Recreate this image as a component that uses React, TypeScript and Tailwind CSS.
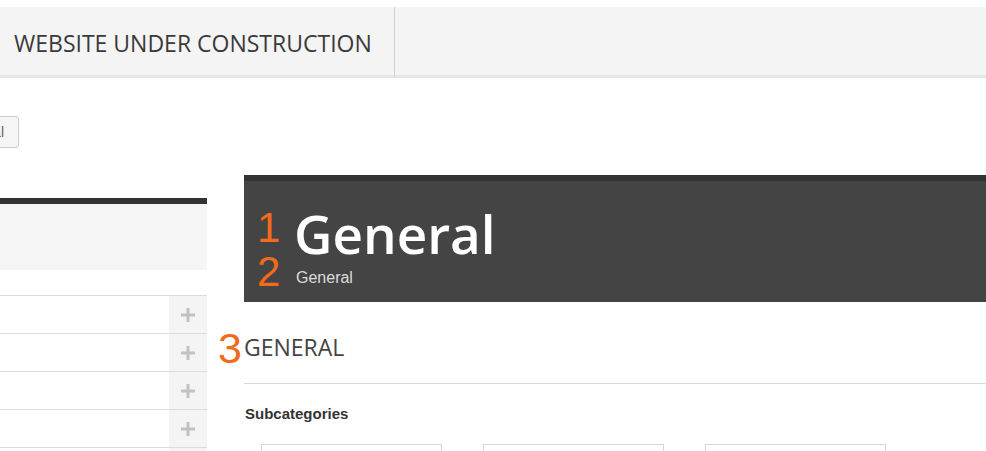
import React from 'react';

const PlusIcon: React.FC = () => (
  <svg viewBox="0 0 14 14" className="w-[14px] h-[14px]" fill="#c2c2c2">
    <rect x="5.5" y="0" width="3" height="14" />
    <rect x="0" y="5.5" width="14" height="3" />
  </svg>
);

const SideRow: React.FC = () => (
  <div className="flex h-[38px] border-t border-[#dcdcdc]">
    <div className="flex-1" />
    <div className="w-[38px] bg-[#f4f4f4] flex items-center justify-center">
      <PlusIcon />
    </div>
  </div>
);

const SubCard: React.FC = () => (
  <div className="w-[181px] h-[60px] border border-[#d6d6d6] bg-white" />
);

const App: React.FC = () => {
  return (
    <div className="w-[986px] h-[451px] overflow-hidden bg-white font-['Liberation_Sans',Arial,sans-serif]">
      <div className="pt-[7px]">
        <header className="h-[71px] bg-[#f4f4f4] border-b-[3px] border-[#e6e6e6] flex">
          <div className="w-[395px] border-r border-[#cfcfcf] flex items-center pl-[14px] -mb-[3px]">
            <span className="font-['Open_Sans',sans-serif] text-[23px] text-[#3a3a3a] leading-none pt-[2px]">
              WEBSITE UNDER CONSTRUCTION
            </span>
          </div>
        </header>
      </div>

      <div className="flex">
        {/* sidebar, partly cut off on the left */}
        <aside className="w-[207px] shrink-0">
          <div className="mt-[38px] h-[32px] flex">
            <button className="w-[81px] -ml-[62px] h-[32px] border border-[#cccccc] bg-[#f5f5f5] rounded-[3px] text-[14px] text-[#666] text-right pr-[14px] shrink-0">
              General
            </button>
          </div>
          <div className="mt-[50px] border-t-[6px] border-[#333333]">
            <div className="h-[66px] bg-[#f5f5f5]" />
            <div className="mt-[25px]">
              <SideRow />
              <SideRow />
              <SideRow />
              <SideRow />
              <SideRow />
            </div>
          </div>
        </aside>

        {/* main content */}
        <main className="ml-[37px] flex-1 mt-[97px]">
          <div className="h-[127px] bg-[#444444] border-t-[6px] border-[#333333] flex pt-[25px]">
            <div className="w-[50px] pl-[13px] flex flex-col text-[#f26a1b] text-[42px] leading-none">
              <span className="mt-[1px]">1</span>
              <span className="mt-[2px]">2</span>
            </div>
            <div className="flex flex-col">
              <h1 className="font-['Open_Sans',sans-serif] font-semibold text-[53px] leading-none text-white pt-[1px]">
                General
              </h1>
              <span className="mt-[10px] ml-[2px] text-[16px] leading-none text-[#dcdcdc]">General</span>
            </div>
          </div>

          <div className="mt-[25px] flex items-start">
            <span className="-ml-[26px] w-[26px] text-[43px] leading-none text-[#f26a1b]">3</span>
            <h2 className="mt-[9px] font-['Open_Sans',sans-serif] text-[23px] leading-none text-[#444]">GENERAL</h2>
          </div>

          <div className="mt-[13px] border-t border-[#d9d9d9]" />

          <h3 className="mt-[22px] ml-[1px] text-[15px] font-bold leading-none text-[#333]">Subcategories</h3>

          <div className="mt-[23px] ml-[17px] flex gap-[41px]">
            <SubCard />
            <SubCard />
            <SubCard />
          </div>
        </main>
      </div>
    </div>
  );
};

export default App;
